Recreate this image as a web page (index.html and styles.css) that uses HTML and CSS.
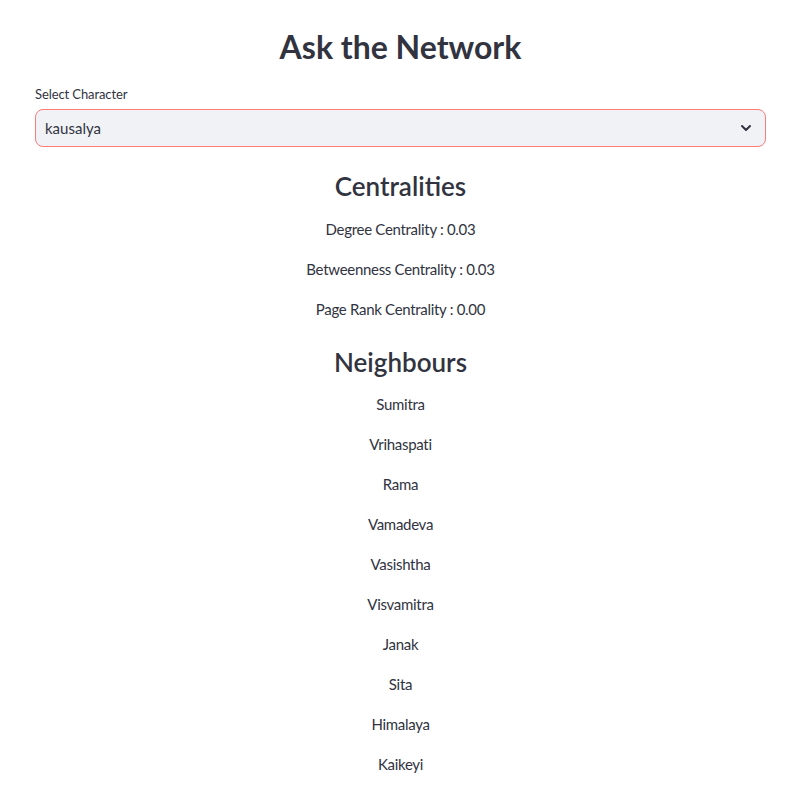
FILE: index.html
```html
<!DOCTYPE html>
<html lang="en">
<head>
<meta charset="utf-8">
<title>Ask the Network</title>
<link rel="stylesheet" href="styles.css">
</head>
<body>
<main class="app">
  <h1 class="title">Ask the Network</h1>
  <div class="field">
    <label class="label">Select Character</label>
    <div class="select">
      <span class="value">kausalya</span>
      <svg class="chev" width="12" height="8" viewBox="0 0 12 8"><path d="M2 2l4 4 4-4" fill="none" stroke="#31333f" stroke-width="2" stroke-linecap="round" stroke-linejoin="round"/></svg>
    </div>
  </div>
  <section class="block first">
    <h3 class="heading">Centralities</h3>
    <div class="list">
      <p>Degree Centrality : 0.03</p>
      <p>Betweenness Centrality : 0.03</p>
      <p>Page Rank Centrality : 0.00</p>
    </div>
  </section>
  <section class="block second">
    <h3 class="heading">Neighbours</h3>
    <div class="list">
      <p>Sumitra</p>
      <p>Vrihaspati</p>
      <p>Rama</p>
      <p>Vamadeva</p>
      <p>Vasishtha</p>
      <p>Visvamitra</p>
      <p>Janak</p>
      <p>Sita</p>
      <p>Himalaya</p>
      <p>Kaikeyi</p>
    </div>
  </section>
</main>
</body>
</html>
```
FILE: styles.css
```css
html, body {
  margin: 0;
  padding: 0;
  background: #ffffff;
}
body {
  font-family: Lato, "Noto Sans", sans-serif;
  color: #31333f;
}
.app {
  margin: 0 35px;
  padding-top: 21px;
  display: flex;
  flex-direction: column;
}
.title {
  margin: 0;
  font-size: 32px;
  line-height: 52px;
  font-weight: 700;
  text-align: center;
}
.field {
  margin-top: 11px;
  display: flex;
  flex-direction: column;
  gap: 5px;
}
.label {
  font-size: 13px;
  letter-spacing: -0.1px;
  line-height: 20px;
}
.select {
  height: 38px;
  box-sizing: border-box;
  border: 1px solid #ff7a7a;
  border-radius: 8px;
  background: #f0f2f6;
  display: flex;
  align-items: center;
  justify-content: space-between;
  padding: 0 13px 0 9px;
}
.value {
  font-size: 15px;
}
.block {
  display: flex;
  flex-direction: column;
  text-align: center;
}
.block.first { margin-top: 21px; gap: 14px; }
.block.second { margin-top: 22px; gap: 13px; }
.heading {
  margin: 0;
  font-size: 26px;
  line-height: 36px;
  font-weight: 600;
}
.list {
  display: flex;
  flex-direction: column;
  gap: 16px;
}
.list p {
  margin: 0;
  font-size: 15px;
  letter-spacing: -0.3px;
  line-height: 23px;
  padding-bottom: 1px;
}
```
